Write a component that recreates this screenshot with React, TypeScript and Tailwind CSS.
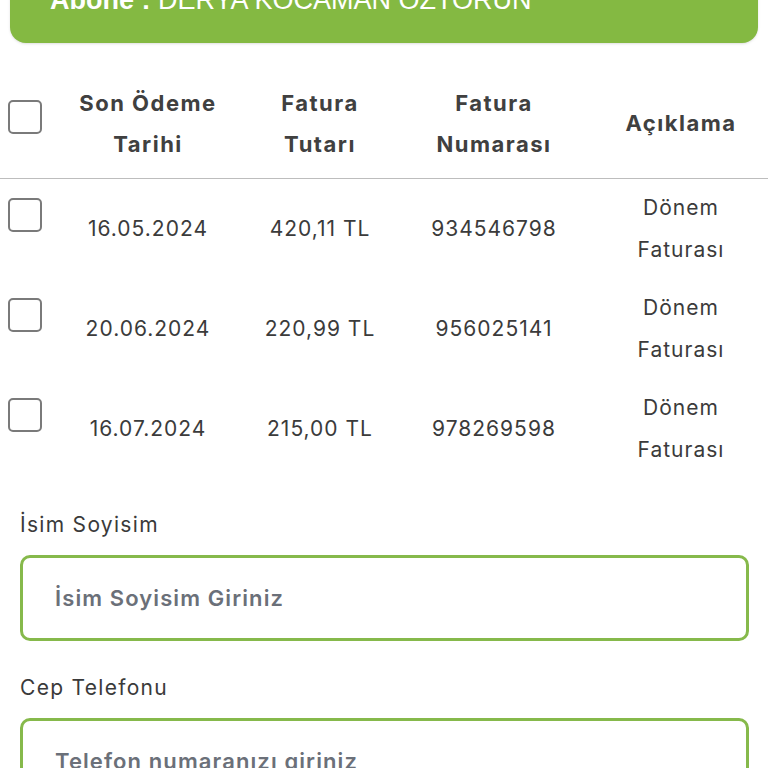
import React from "react";

const rows = [
  { date: "16.05.2024", amount: "420,11 TL", no: "934546798" },
  { date: "20.06.2024", amount: "220,99 TL", no: "956025141" },
  { date: "16.07.2024", amount: "215,00 TL", no: "978269598" },
];

const cols = "grid grid-cols-[50px_196px_148px_200px_174px]";

const Box = () => (
  <div className="ml-[8px] h-[34px] w-[34px] rounded-[5px] border-2 border-[#7a7a7a] bg-white" />
);

const Field = ({ label, placeholder }: { label: string; placeholder: string }) => (
  <div className="flex flex-col">
    <label className="text-[21px] leading-[28px] tracking-[1.3px] text-[#3a3a3a]">{label}</label>
    <div className="mt-[16px] flex h-[86px] items-center rounded-[10px] border-[3px] border-[#86b94b] px-[32px]">
      <span className="text-[22px] font-semibold tracking-[1.1px] text-[#6b7079]">{placeholder}</span>
    </div>
  </div>
);

export default function App() {
  return (
    <div className="min-h-[768px] overflow-hidden bg-white font-['Inter',sans-serif] text-[#3b3b3b]">
      <div className="mx-[10px] -mt-[57px] h-[100px] rounded-[16px] bg-[#84b942] pl-[40px] pt-[42px] font-['Liberation_Sans',sans-serif] text-[27px] leading-[30px] text-white shadow-sm">
        <span className="font-bold">Abone :</span> DERYA KOCAMAN ÖZTORUN
      </div>

      <div className={`${cols} mt-[39px] h-[97px] border-b border-[#bdbdbd] pb-[13px]`}>
        <div className="pt-[18px]">
          <Box />
        </div>
        {["Son Ödeme Tarihi", "Fatura Tutarı", "Fatura Numarası", "Açıklama"].map(h => (
          <div key={h} className="flex items-center justify-center">
            <span
              className={`text-center text-[22px] font-bold leading-[41px] tracking-[1.5px] text-[#404040] ${
                h === "Açıklama" ? "" : h === "Fatura Tutarı" ? "max-w-[110px]" : "max-w-[160px]"
              }`}
            >
              {h}
            </span>
          </div>
        ))}
      </div>

      {rows.map(r => (
        <div key={r.no} className={`${cols} h-[100px] text-[21px] leading-[42px] tracking-[1px]`}>
          <div className="pt-[19px]">
            <Box />
          </div>
          <div className="flex items-center justify-center">{r.date}</div>
          <div className="flex items-center justify-center">{r.amount}</div>
          <div className="flex items-center justify-center">{r.no}</div>
          <div className="flex flex-col items-center justify-center">
            <span>Dönem</span>
            <span>Faturası</span>
          </div>
        </div>
      ))}

      <div className="mt-[32px] flex flex-col gap-[33px] pl-[20px] pr-[19px]">
        <Field label="İsim Soyisim" placeholder="İsim Soyisim Giriniz" />
        <Field label="Cep Telefonu" placeholder="Telefon numaranızı giriniz" />
      </div>
    </div>
  );
}
